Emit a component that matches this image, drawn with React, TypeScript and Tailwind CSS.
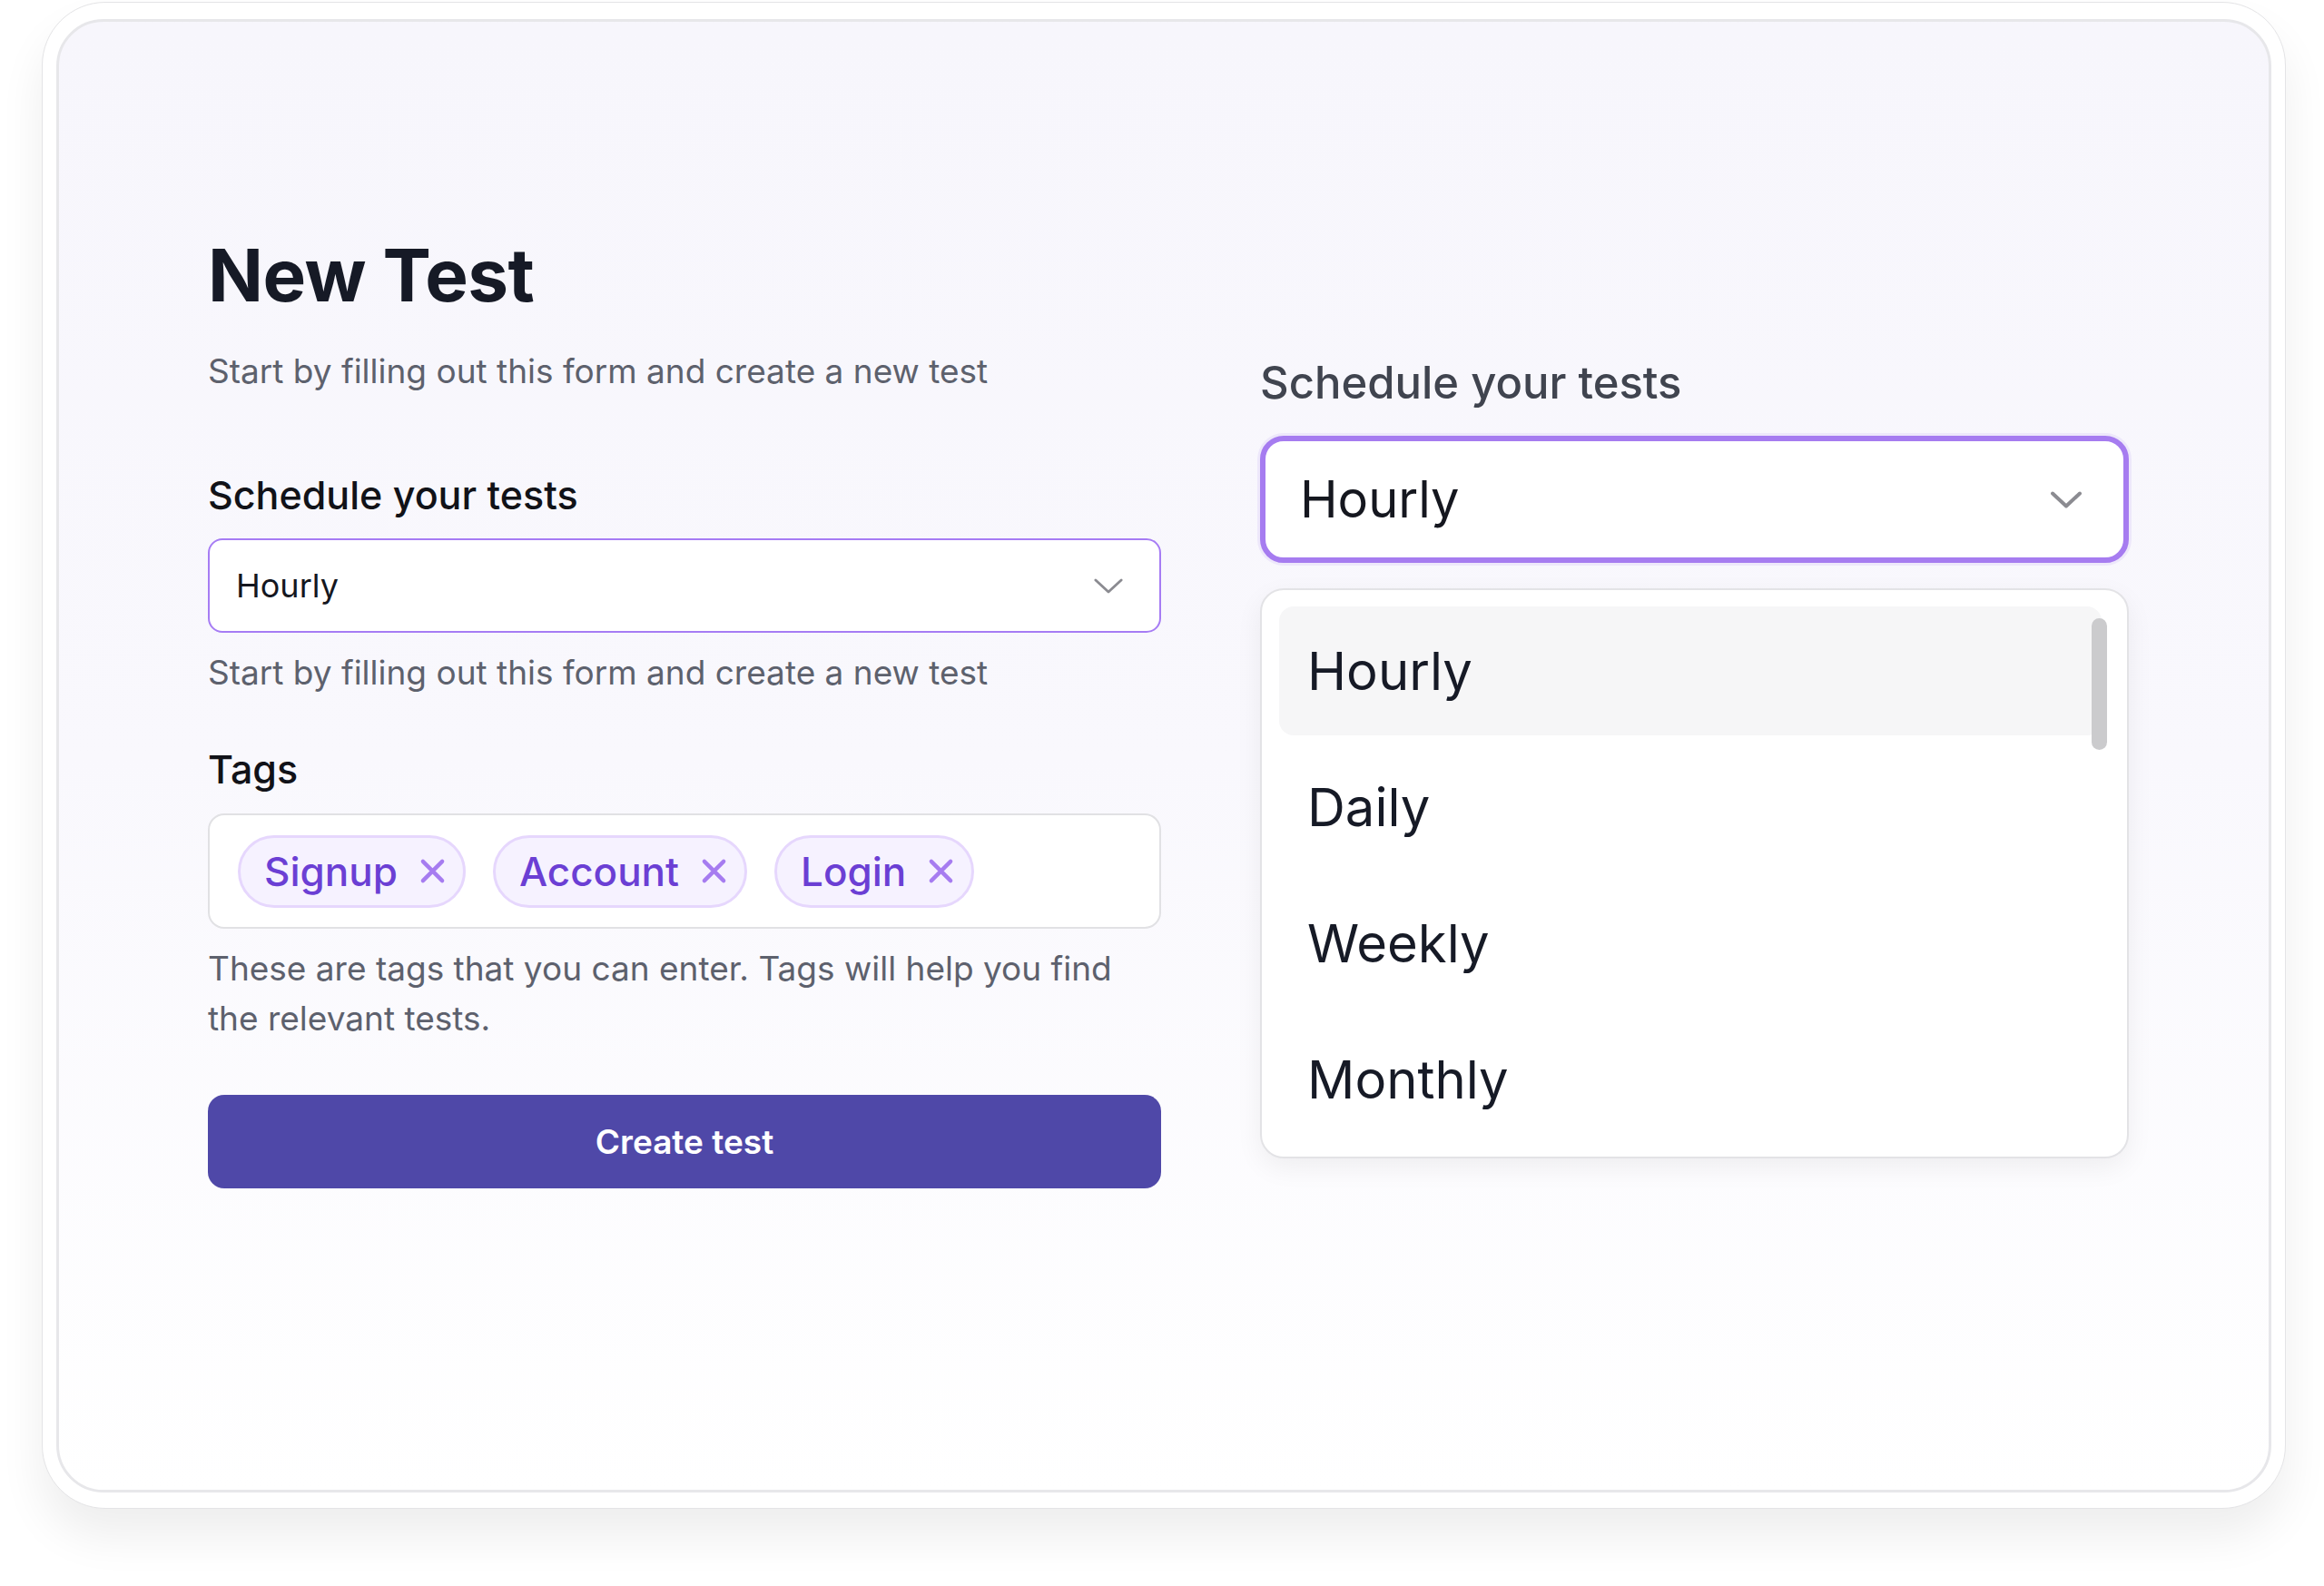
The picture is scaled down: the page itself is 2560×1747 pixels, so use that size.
const tags = ["Signup", "Account", "Login"]
const options = ["Hourly", "Daily", "Weekly", "Monthly"]

const Chevron = ({ className, stroke }: { className: string; stroke: number }) => (
    <svg viewBox="0 0 34 18" fill="none" className={className}>
        <polyline points="2,2 17,16 32,2" stroke="#8b8b91" strokeWidth={stroke} strokeLinecap="round" strokeLinejoin="round" />
    </svg>
)

const Cross = () => (
    <svg viewBox="0 0 30 30" fill="none" className="w-[29px] h-[29px]">
        <path d="M4 4 L26 26 M26 4 L4 26" stroke="#a67cf0" strokeWidth="4.5" strokeLinecap="round" />
    </svg>
)

const Tag = ({ label }: { label: string }) => (
    <div className="flex items-center h-[80px] pl-[26px] pr-[19px] gap-[24px] rounded-full bg-[#f6f2ff] border-[3px] border-[#e6d7fd]">
        <span className="text-[44px] font-medium text-[#6b3fd4] leading-none">{label}</span>
        <Cross />
    </div>
)

const App = () => {
    return (
        <div className="min-h-[1747px] w-full bg-white pl-[46px] pt-[2px] font-['Inter',sans-serif]">
            <div className="w-[2472px] h-[1660px] rounded-[70px] bg-white border border-[#e4e4e6] pt-[18px] px-[15px] pb-[17px] shadow-[0_30px_50px_rgba(0,0,0,0.07)]">
                <div className="h-full rounded-[52px] border-[3px] border-[#e7e7ea] bg-gradient-to-b from-[#f7f6fc] via-[#f9f8fd] to-white pl-[164px] pt-[239px] flex gap-[109px]">
                    {/* left: form */}
                    <div className="w-[1050px] flex flex-col">
                        <h1 className="text-[80px] leading-none font-bold text-[#161a26] tracking-[-0.5px]">New Test</h1>
                        <p className="mt-[39px] text-[37px] leading-[54px] text-[#5d616d]">Start by filling out this form and create a new test</p>

                        <div className="mt-[84px] text-[43px] leading-[50px] font-medium text-[#111218]">Schedule your tests</div>
                        <div className="mt-[23px] h-[104px] rounded-[16px] border-2 border-[#a67cf4] bg-white flex items-center justify-between pl-[29px] pr-[40px]">
                            <span className="text-[36px] text-[#15171f]">Hourly</span>
                            <Chevron className="w-[32px] h-[17px]" stroke={3} />
                        </div>
                        <p className="mt-[17px] text-[37px] leading-[54px] text-[#5d616d]">Start by filling out this form and create a new test</p>

                        <div className="mt-[54px] text-[43px] leading-[50px] font-medium text-[#111218]">Tags</div>
                        <div className="mt-[24px] h-[127px] rounded-[18px] border-2 border-[#e1e1e4] bg-white flex items-center gap-[30px] pl-[31px]">
                            {tags.map(t => <Tag key={t} label={t} />)}
                        </div>
                        <p className="mt-[16px] text-[37px] leading-[55px] text-[#5d616d] pr-[10px]">These are tags that you can enter. Tags will help you find the relevant tests.</p>

                        <button className="mt-[57px] h-[103px] rounded-[18px] bg-[#4f48a8] text-white text-[37px] font-semibold">Create test</button>
                    </div>

                    {/* right: open select */}
                    <div className="w-[957px] mt-[131px] flex flex-col">
                        <div className="text-[49px] leading-[56px] font-medium text-[#40444f]">Schedule your tests</div>
                        <div className="mt-[30px] h-[140px] rounded-[26px] border-[6px] border-[#a67cf0] bg-white flex items-center justify-between pl-[38px] pr-[46px] shadow-[0_0_0_3px_rgba(166,124,240,0.12)]">
                            <span className="text-[56px] text-[#15171f]">Hourly</span>
                            <Chevron className="w-[34px] h-[19px]" stroke={4} />
                        </div>
                        <div className="relative mt-[28px] h-[628px] rounded-[26px] border-2 border-[#e3e3e6] bg-white pt-[18px] pl-[19px] pr-[28px] shadow-[0_10px_30px_rgba(0,0,0,0.06)]">
                            <div className="flex flex-col gap-[8px]">
                                {options.map((o, i) => (
                                    <div key={o} className={`h-[142px] rounded-[16px] pl-[31px] flex items-center text-[58px] text-[#161a26] ${i === 0 ? "bg-[#f6f6f7]" : ""}`}>
                                        {o}
                                    </div>
                                ))}
                            </div>
                            <div className="absolute right-[22px] top-[31px] w-[17px] h-[145px] rounded-full bg-[#cbcbcd]" />
                        </div>
                    </div>
                </div>
            </div>
        </div>
    )
}

export default App
